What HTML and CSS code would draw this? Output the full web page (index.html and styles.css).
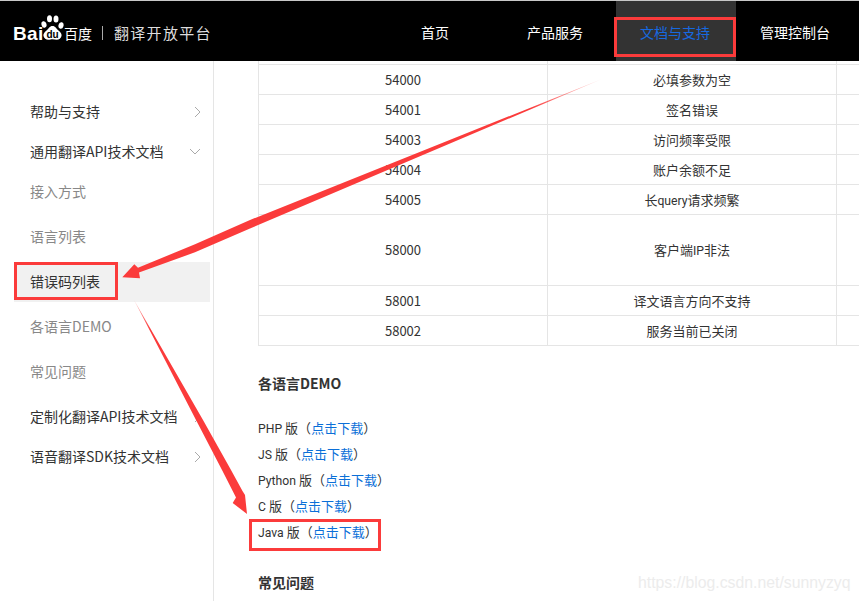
FILE: index.html
```html
<!DOCTYPE html>
<html lang="zh-CN">
<head>
<meta charset="utf-8">
<title>百度翻译开放平台</title>
<link rel="stylesheet" href="styles.css">
</head>
<body>
<div class="page">
  <header class="header">
    <div class="brand">
      <span class="brand-bai">Bai</span>
      <svg class="brand-paw" viewBox="0 0 24 26" width="24" height="26" aria-hidden="true">
        <ellipse cx="4" cy="9.500" rx="2.500" ry="3.300" transform="rotate(-15 4 9.500)"/>
        <ellipse cx="9.500" cy="3.800" rx="2.500" ry="3.500"/>
        <ellipse cx="16" cy="4" rx="2.500" ry="3.500"/>
        <ellipse cx="21" cy="10.500" rx="2.500" ry="3.300" transform="rotate(15 21 10.500)"/>
        <path d="M12.500 11c3 0 3.600 2.600 6 4.400 2.600 2 3.400 3.800 3 5.600-.5 2.500-2.800 4-5 3.800-1.500-.1-2.600-.6-4-.6s-2.500.5-4 .6c-2.200.2-4.500-1.300-5-3.800-.4-1.800.4-3.600 3-5.600 2.400-1.800 3-4.400 6-4.400z"/>
        <text class="brand-du" x="12.500" y="22.500" text-anchor="middle">du</text>
      </svg>
      <span class="brand-cn">百度</span>
      <span class="brand-divider"></span>
      <span class="brand-title">翻译开放平台</span>
    </div>
    <nav class="nav">
      <a class="nav-item">首页</a>
      <a class="nav-item">产品服务</a>
      <a class="nav-item nav-item-active">文档与支持</a>
      <a class="nav-item">管理控制台</a>
    </nav>
  </header>
  <div class="body">
    <aside class="sidebar">
      <div class="side-head"><span class="side-label">帮助与支持</span>
        <svg class="chev" viewBox="0 0 10 10" width="10" height="10"><path d="M5 0l5 5-5 5"/></svg></div>
      <div class="side-head"><span class="side-label">通用翻译API技术文档</span>
        <svg class="chev" viewBox="0 0 10 10" width="10" height="10"><path d="M0 2l5 5 5-5"/></svg></div>
      <div class="side-sub">接入方式</div>
      <div class="side-sub">语言列表</div>
      <div class="side-sub side-sub-active">错误码列表</div>
      <div class="side-sub">各语言DEMO</div>
      <div class="side-sub">常见问题</div>
      <div class="side-head"><span class="side-label">定制化翻译API技术文档</span>
        <svg class="chev" viewBox="0 0 10 10" width="10" height="10"><path d="M5 0l5 5-5 5"/></svg></div>
      <div class="side-head"><span class="side-label">语音翻译SDK技术文档</span>
        <svg class="chev" viewBox="0 0 10 10" width="10" height="10"><path d="M5 0l5 5-5 5"/></svg></div>
    </aside>
    <main class="main">
      <table class="codes">
        <tbody>
          <tr class="row-cut"><td class="col-a"></td><td class="col-b"></td><td class="col-c"></td></tr>
          <tr><td class="col-a">54000</td><td class="col-b">必填参数为空</td><td class="col-c"></td></tr>
          <tr><td class="col-a">54001</td><td class="col-b">签名错误</td><td class="col-c"></td></tr>
          <tr><td class="col-a">54003</td><td class="col-b">访问频率受限</td><td class="col-c"></td></tr>
          <tr><td class="col-a">54004</td><td class="col-b">账户余额不足</td><td class="col-c"></td></tr>
          <tr><td class="col-a">54005</td><td class="col-b">长<span class="lat">query</span>请求频繁</td><td class="col-c"></td></tr>
          <tr class="row-tall"><td class="col-a">58000</td><td class="col-b">客户端<span class="lat">IP</span>非法</td><td class="col-c"></td></tr>
          <tr><td class="col-a">58001</td><td class="col-b">译文语言方向不支持</td><td class="col-c"></td></tr>
          <tr><td class="col-a">58002</td><td class="col-b">服务当前已关闭</td><td class="col-c"></td></tr>
        </tbody>
      </table>
      <h3 class="section-title">各语言DEMO</h3>
      <ul class="demo-list">
        <li><span class="lat">PHP </span>版（<a class="link">点击下载</a>）</li>
        <li><span class="lat">JS </span>版（<a class="link">点击下载</a>）</li>
        <li><span class="lat">Python </span>版（<a class="link">点击下载</a>）</li>
        <li><span class="lat">C </span>版（<a class="link">点击下载</a>）</li>
        <li><span class="lat">Java </span>版（<a class="link">点击下载</a>）</li>
      </ul>
      <h3 class="section-title">常见问题</h3>
    </main>
  </div>
  <svg class="marks" viewBox="0 0 859 601" width="859" height="601" aria-hidden="true">
    <defs>
      <linearGradient id="fade" gradientUnits="userSpaceOnUse" x1="602" y1="79" x2="530" y2="109">
        <stop offset="0" stop-color="#fb3b3b" stop-opacity="0.15"/>
        <stop offset="1" stop-color="#fb3b3b"/>
      </linearGradient>
      <linearGradient id="fade2" gradientUnits="userSpaceOnUse" x1="134" y1="300" x2="150" y2="330">
        <stop offset="0" stop-color="#fb3b3b" stop-opacity="0.35"/>
        <stop offset="1" stop-color="#fb3b3b"/>
      </linearGradient>
    </defs>
    <polygon fill="url(#fade)" points="602,79 250,220 195,244.300 138,267.700 134.300,264.300 122.300,277.300 140,278.300 139,272.500 195,252.300 250,228.500"/>
    <polygon fill="url(#fade2)" points="134,300 203,420 231,470 242.500,491 245,495 247,514 232.700,503 236,497.500 222,470 196,420"/>
    <rect class="mark-box" x="615.500" y="18.500" width="119" height="37"/>
    <rect class="mark-box" x="15.500" y="263.500" width="101" height="35"/>
    <rect class="mark-box" x="250.500" y="520.500" width="129" height="29"/>
  </svg>
  <div class="watermark">https://blog.csdn.net/sunnyzyq</div>
</div>
</body>
</html>
```
FILE: styles.css
```css
* { box-sizing: border-box; }
html, body { margin: 0; padding: 0; background: #fff; }
body {
  font-family: "Noto Sans CJK SC", "Noto Sans", sans-serif;
  font-size: 13px;
  color: #333;
}
.page {
  position: relative;
  width: 859px;
  height: 601px;
  overflow: hidden;
  display: flex;
  flex-direction: column;
}
.header {
  flex: none;
  height: 61px;
  border-top: 1px solid #c8c8c8;
  background: #000;
  display: flex;
  justify-content: space-between;
  padding: 0 3px 0 13px;
}
.brand {
  display: flex;
  align-items: center;
  color: #eee;
  padding-top: 3px;
}
.brand-bai {
  font-family: "Liberation Sans", sans-serif;
  font-weight: 700;
  font-size: 19px;
  letter-spacing: 0.300px;
  line-height: 20px;
  width: 28px;
  margin-top: 2px;
  color: #fff;
}
.brand-paw { fill: #fff; margin: -9px 0 0 -1px; flex: none; }
.brand-du {
  font-family: "Liberation Sans", sans-serif;
  font-size: 10px;
  font-weight: 700;
  fill: #000;
}
.brand-cn { font-size: 14px; width: 28px; color: #fff; }
.brand-divider { width: 1px; height: 14px; background: #aaa; margin: 0 11px 0 10px; }
.brand-title { font-size: 15px; letter-spacing: 1.300px; color: #ddd; }
.nav { display: flex; }
.nav-item {
  width: 120px;
  padding-right: 2px;
  line-height: 62px;
  text-align: center;
  font-size: 14px;
  color: #fff;
}
.nav-item-active { background: #333; color: #1769e0; }
.body { flex: 1; display: flex; min-height: 0; }
.sidebar {
  flex: none;
  width: 214px;
  border-right: 1px solid #e5e5e5;
  padding-top: 31px;
  font-size: 14px;
}
.side-head {
  height: 40px;
  padding: 0 13px 0 30px;
  display: flex;
  align-items: center;
  justify-content: space-between;
  color: #333;
  white-space: nowrap;
}
.side-label { line-height: 20px; margin-bottom: 2px; }
.chev { flex: none; margin-left: -40px; fill: none; stroke: #aaa; stroke-width: 1; }
.side-sub {
  height: 40px;
  line-height: 38px;
  margin: 0 3px 5px 14px;
  padding-left: 16px;
  color: #888;
}
.side-sub-active { background: #f1f1f1; color: #333; }
.main { flex: 1; padding-left: 44px; overflow: hidden; }
.codes {
  table-layout: fixed;
  width: 800px;
  border-collapse: separate;
  border-spacing: 0;
}
.codes td {
  height: 30px;
  padding: 0;
  text-align: center;
  border-right: 1px solid #e5e5e5;
  border-bottom: 1px solid #e5e5e5;
}
.codes .col-a { width: 290px; border-left: 1px solid #e5e5e5; }
.codes .col-b { width: 289px; }
.codes .row-cut td { height: 4px; }
.codes .row-tall td { height: 71px; padding-bottom: 2px; }
.lat { font-family: Roboto, sans-serif; font-size: 12.200px; }
.section-title {
  margin: 28px 0 23px;
  font-size: 14px;
  line-height: 18px;
  font-weight: 700;
  color: #333;
}
.demo-list { list-style: none; margin: 0; padding: 0; }
.demo-list li { height: 26px; line-height: 26px; white-space: nowrap; }
.link { color: #0b6fd8; }
.marks { position: absolute; left: 0; top: 0; pointer-events: none; }
.mark-box { fill: none; stroke: #fb3b3b; stroke-width: 3; }
.watermark {
  position: absolute;
  left: 638px;
  top: 574px;
  font-family: "Liberation Sans", sans-serif;
  font-size: 15.800px;
  line-height: 18px;
  color: #ececec;
  white-space: nowrap;
}
```
